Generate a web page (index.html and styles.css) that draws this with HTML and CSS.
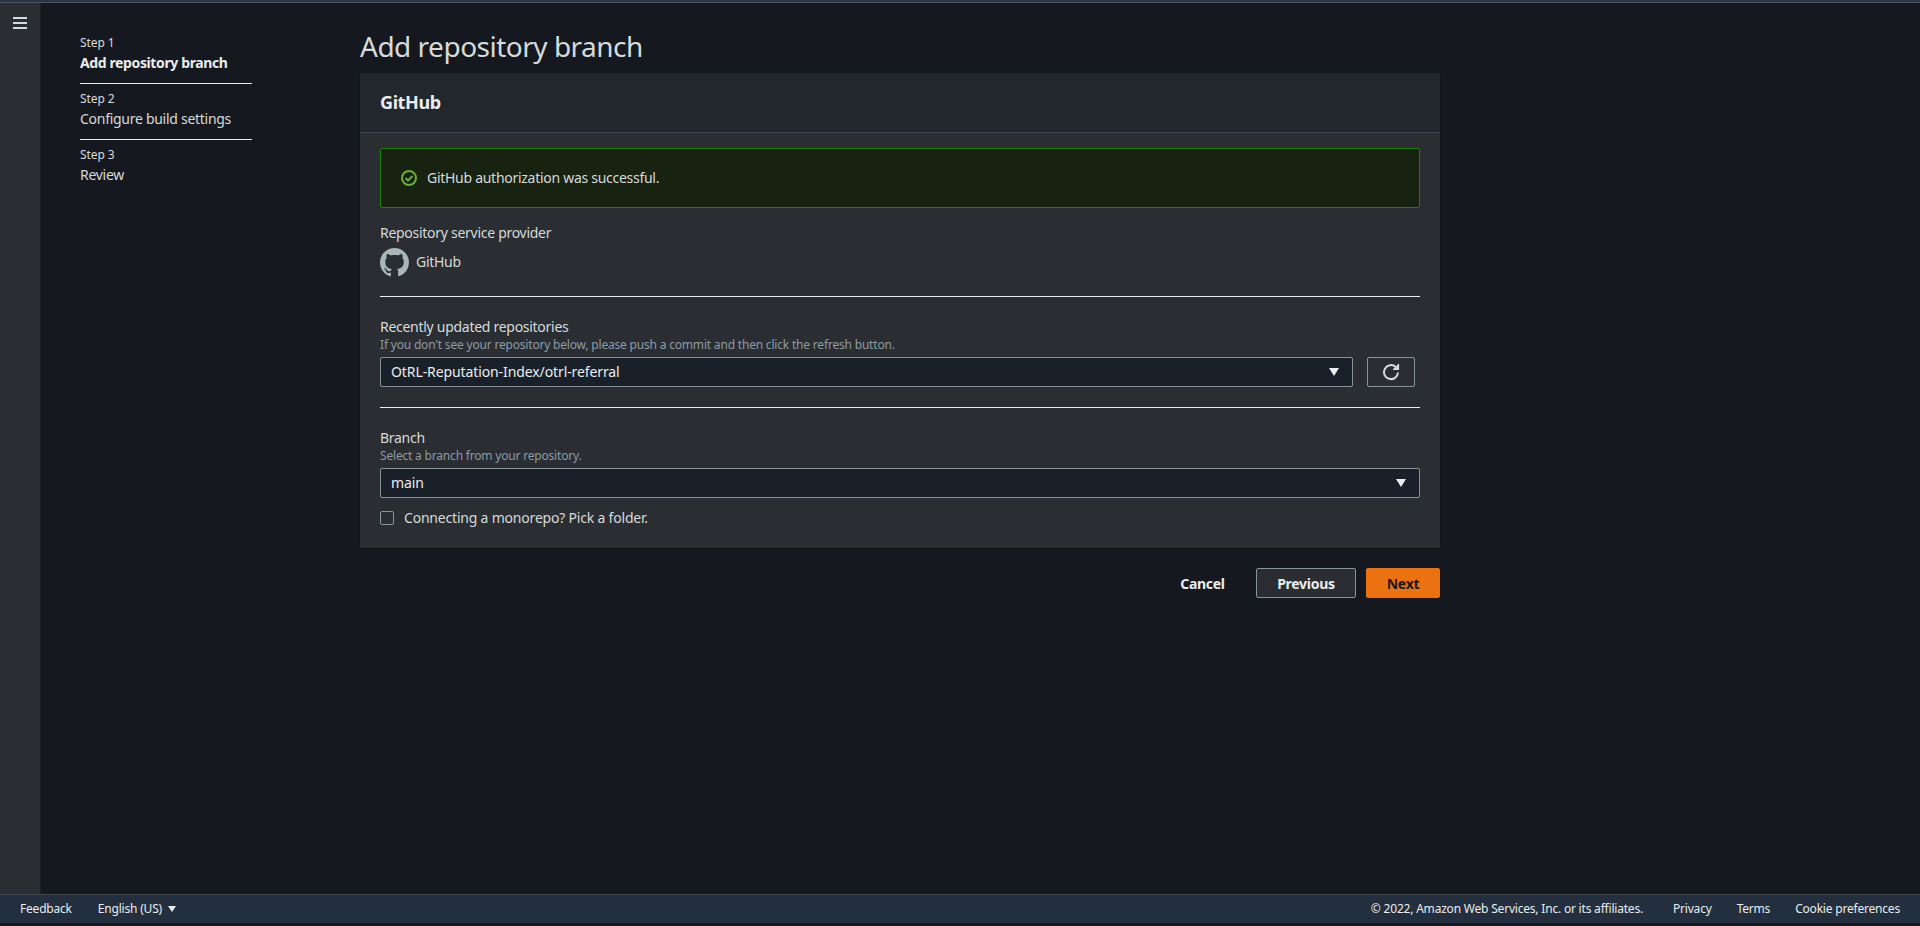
FILE: index.html
```html
<!DOCTYPE html>
<html lang="en">
<head>
	<meta charset="UTF-8">
	<title>Add repository branch</title>
	<link rel="stylesheet" href="styles.css">
</head>
<body class="body">
	<div class="topline"></div>
	<div class="shell">
		<aside class="rail">
			<button class="rail__menu" aria-label="Open navigation">
				<svg width="14" height="12" viewBox="0 0 14 12"><path d="M0 1h14M0 6h14M0 11h14" stroke="#d5dbdb" stroke-width="2"/></svg>
			</button>
		</aside>
		<nav class="steps">
			<div class="step">
				<div class="step__num">Step 1</div>
				<div class="step__name step__name--active">Add repository branch</div>
			</div>
			<div class="step">
				<div class="step__num">Step 2</div>
				<div class="step__name">Configure build settings</div>
			</div>
			<div class="step">
				<div class="step__num">Step 3</div>
				<div class="step__name">Review</div>
			</div>
		</nav>
		<main class="main">
			<h1 class="title">Add repository branch</h1>
			<section class="card">
				<h2 class="card__head">GitHub</h2>
				<div class="card__body">
					<div class="alert">
						<svg class="alert__icon" width="16" height="16" viewBox="0 0 16 16" fill="none" stroke="#6aaf35" stroke-width="2"><circle cx="8" cy="8" r="7"/><path d="M4.5 8l2.5 2.5L11.5 6"/></svg>
						<span>GitHub authorization was successful.</span>
					</div>
					<div class="label label--provider">Repository service provider</div>
					<div class="provider">
						<svg class="provider__logo" width="29" height="29" viewBox="0 0 16 16"><path fill="#aab7b8" d="M8 0C3.58 0 0 3.58 0 8c0 3.54 2.29 6.53 5.47 7.59.4.07.55-.17.55-.38 0-.19-.01-.82-.01-1.49-2.01.37-2.53-.49-2.69-.94-.09-.23-.48-.94-.82-1.13-.28-.15-.68-.52-.01-.53.63-.01 1.08.58 1.23.82.72 1.21 1.87.87 2.33.66.07-.52.28-.87.51-1.07-1.78-.2-3.64-.89-3.64-3.95 0-.87.31-1.59.82-2.15-.08-.2-.36-1.02.08-2.12 0 0 .67-.21 2.2.82.64-.18 1.32-.27 2-.27s1.36.09 2 .27c1.53-1.04 2.2-.82 2.2-.82.44 1.1.16 1.92.08 2.12.51.56.82 1.27.82 2.15 0 3.07-1.87 3.75-3.65 3.95.29.25.54.73.54 1.48 0 1.07-.01 1.93-.01 2.2 0 .21.15.46.55.38A8.01 8.01 0 0 0 16 8c0-4.42-3.58-8-8-8z"/></svg>
						<span>GitHub</span>
					</div>
					<hr class="rule">
					<div class="label">Recently updated repositories</div>
					<div class="hint">If you don't see your repository below, please push a commit and then click the refresh button.</div>
					<div class="picker">
						<div class="select">
							<span>OtRL-Reputation-Index/otrl-referral</span>
							<i class="caret"></i>
						</div>
						<button class="refresh" aria-label="Refresh">
							<svg width="18" height="18" viewBox="0 0 18 18" fill="none" stroke="#d5dbdb" stroke-width="2"><path d="M16 9.5a7 7 0 1 1-2.3-5.6"/><path d="M16.4 1v5.2h-5.2" fill="#d5dbdb" stroke-width="1.4"/></svg>
						</button>
					</div>
					<hr class="rule">
					<div class="label">Branch</div>
					<div class="hint">Select a branch from your repository.</div>
					<div class="select">
						<span>main</span>
						<i class="caret"></i>
					</div>
					<label class="check">
						<span class="check__box"></span>
						<span>Connecting a monorepo? Pick a folder.</span>
					</label>
				</div>
			</section>
			<div class="actions">
				<button class="btn btn--link">Cancel</button>
				<button class="btn btn--normal">Previous</button>
				<button class="btn btn--primary">Next</button>
			</div>
		</main>
	</div>
	<footer class="footer">
		<a class="footer__link">Feedback</a>
		<a class="footer__lang">English (US) <i class="caret caret--small"></i></a>
		<span class="footer__copy">© 2022, Amazon Web Services, Inc. or its affiliates.</span>
		<a class="footer__link">Privacy</a>
		<a class="footer__link">Terms</a>
		<a class="footer__link">Cookie preferences</a>
	</footer>
	<div class="bottomline"></div>
</body>
</html>
```

FILE: styles.css
```css
:root {
	--page: #15181f;
	--panel: #2a2e33;
	--panel-head: #22262d;
	--text: #d5dbdb;
	--text-light: #eaeded;
	--muted: #8d9ba3;
	--line: #eaeded;
	--input: #1a2029;
	--input-line: #879596;
}

*,
*::before,
*::after {
	box-sizing: border-box;
}

html {
	height: 100%;
}

.body {
	display: flex;
	flex-direction: column;
	height: 100%;
	margin: 0;
	overflow: hidden;
	color: var(--text);
	background-color: var(--page);
	font-family: "Noto Sans", sans-serif;
	font-size: 14px;
	letter-spacing: -0.28px;
	line-height: 22px;
}

.topline {
	flex: none;
	height: 3px;
	background-color: #2b3340;
	border-bottom: 1px solid #4a5564;
}

.shell {
	flex: 1;
	display: flex;
	min-height: 0;
}

.rail {
	flex: none;
	width: 41px;
	background-color: var(--panel);
	border-right: 1px solid #1d2026;
}

.rail__menu {
	display: block;
	width: 40px;
	padding: 14px 0 0 13px;
	line-height: 0;
	text-align: left;
	background: none;
	border: 0;
}

.steps {
	flex: none;
	width: 172px;
	margin: 30px 0 0 39px;
}

.step {
	padding-bottom: 10px;
	border-bottom: 1px solid var(--line);
}

.step:last-child {
	border-bottom: 0;
}

.step + .step {
	padding-top: 5px;
}

.step__num {
	font-size: 12px;
	letter-spacing: -0.1px;
	line-height: 20px;
}

.step__name {
	line-height: 20px;
}

.step__name--active {
	font-weight: 700;
	letter-spacing: -0.38px;
	color: var(--text-light);
}

.main {
	flex: none;
	width: 1080px;
	margin-left: 108px;
}

.title {
	height: 70px;
	margin: 0;
	padding-top: 23px;
	color: var(--text);
	font-size: 28px;
	font-weight: 400;
	letter-spacing: -0.5px;
	line-height: 40px;
}

.card {
	background-color: var(--panel);
	box-shadow: 0 1px 1px rgba(0, 0, 0, 0.4);
}

.card__head {
	height: 60px;
	margin: 0;
	padding: 0 20px;
	color: var(--text-light);
	background-color: var(--panel-head);
	border-bottom: 1px solid #414750;
	font-size: 18px;
	font-weight: 700;
	letter-spacing: -0.4px;
	line-height: 59px;
}

.card__body {
	padding: 15px 20px 18px;
}

.alert {
	display: flex;
	align-items: center;
	gap: 10px;
	height: 60px;
	padding-left: 20px;
	color: var(--text);
	background-color: #172211;
	border: 1px solid #1d8102;
	border-radius: 2px;
}

.alert__icon {
	flex: none;
}

.label {
	color: var(--text);
	line-height: 20px;
}

.label--provider {
	margin-top: 15px;
}

.provider {
	display: flex;
	align-items: center;
	gap: 7px;
	height: 30px;
	margin-top: 4px;
}

.rule {
	height: 1px;
	margin: 20px 0;
	background-color: var(--line);
	border: 0;
}

.provider + .rule {
	margin-top: 19px;
}

.hint {
	color: var(--muted);
	font-size: 12px;
	letter-spacing: -0.19px;
	line-height: 16px;
}

.picker {
	display: flex;
	align-items: center;
}

.picker .select {
	flex: 1;
}

.select {
	display: flex;
	align-items: center;
	justify-content: space-between;
	height: 30px;
	margin-top: 4px;
	padding: 0 13px 0 10px;
	color: var(--text-light);
	background-color: var(--input);
	border: 1px solid var(--input-line);
	border-radius: 2px;
	letter-spacing: -0.1px;
}

.caret {
	display: block;
	width: 0;
	height: 0;
	border-top: 8px solid var(--text-light);
	border-left: 5px solid transparent;
	border-right: 5px solid transparent;
}

.caret--small {
	display: inline-block;
	margin-left: 3px;
	vertical-align: 1px;
	border-top-width: 6px;
	border-left-width: 4px;
	border-right-width: 4px;
}

.refresh {
	display: flex;
	align-items: center;
	justify-content: center;
	flex: none;
	width: 48px;
	height: 30px;
	margin: 4px 5px 0 14px;
	padding: 0;
	background: none;
	border: 1px solid var(--input-line);
	border-radius: 2px;
}

.check {
	display: flex;
	align-items: center;
	gap: 10px;
	height: 24px;
	margin-top: 8px;
	letter-spacing: -0.2px;
}

.check__box {
	width: 14px;
	height: 14px;
	border: 1px solid var(--input-line);
	border-radius: 2px;
}

.actions {
	display: flex;
	justify-content: flex-end;
	align-items: center;
	gap: 10px;
	margin-top: 20px;
}

.btn {
	height: 30px;
	padding: 0;
	font-family: inherit;
	font-size: 14px;
	font-weight: 700;
	letter-spacing: -0.28px;
	border: 1px solid transparent;
	border-radius: 2px;
}

.btn--link {
	width: 87px;
	color: var(--text-light);
	background: none;
}

.btn--normal {
	width: 100px;
	color: var(--text-light);
	background-color: var(--panel);
	border-color: var(--input-line);
}

.btn--primary {
	width: 74px;
	color: #16191f;
	background-color: #ec7211;
	border-color: #ec7211;
}

.footer {
	display: flex;
	align-items: center;
	flex: none;
	height: 29px;
	padding: 0 20px;
	color: var(--text-light);
	background-color: #232f3e;
	border-top: 1px solid #414750;
	font-size: 12px;
	letter-spacing: -0.2px;
	line-height: 16px;
}

.footer__lang {
	margin: 0 auto 0 26px;
}

.footer__link + .footer__link {
	margin-left: 25px;
}

.footer__copy + .footer__link {
	margin-left: 30px;
}

.bottomline {
	flex: none;
	height: 3px;
	background-color: var(--page);
}
```
